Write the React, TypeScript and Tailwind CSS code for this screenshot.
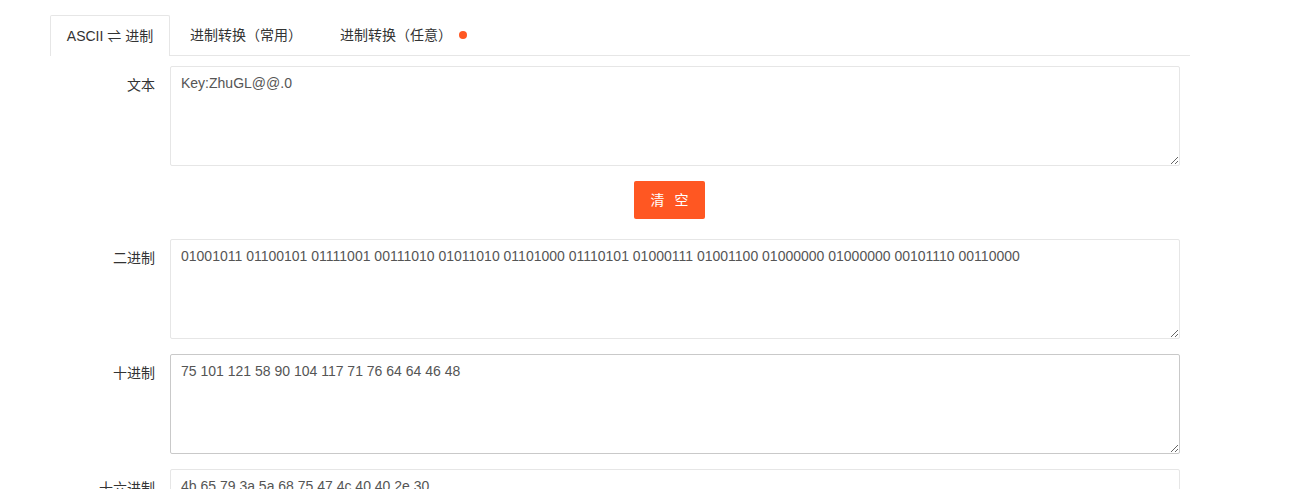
import { useEffect, useRef } from "react";

const font = "font-['Liberation_Sans','Noto_Sans_CJK_SC',sans-serif]";

const rows = [
  { label: "二进制", value: "01001011 01100101 01111001 00111010 01011010 01101000 01110101 01000111 01001100 01000000 01000000 00101110 00110000" },
  { label: "十进制", value: "75 101 121 58 90 104 117 71 76 64 64 46 48", focused: true },
  { label: "十六进制", value: "4b 65 79 3a 5a 68 75 47 4c 40 40 2e 30" },
];

const Field = ({ label, value, focused }: { label: string; value: string; focused?: boolean }) => {
  const ref = useRef<HTMLTextAreaElement>(null);

  useEffect(() => {
    if (focused && ref.current) {
      const el = ref.current;
      el.focus();
      el.setSelectionRange(value.length, value.length);
    }
  }, [focused, value]);

  return (
    <div className="flex mb-[15px]">
      <label className="w-[110px] shrink-0 px-[15px] py-[9px] leading-5 text-right text-[14px] text-[#333]">{label}</label>
      <textarea
        ref={ref}
        defaultValue={value}
        className={`w-[1010px] h-[100px] min-h-[100px] px-[10px] py-[6px] leading-5 text-[14px] text-[#555] bg-white rounded-[2px] border outline-none caret-[#333] ${
          focused ? "border-[#c9c9c9]" : "border-[#e6e6e6]"
        }`}
      />
    </div>
  );
};

export default function App() {
  return (
    <div className={`${font} bg-white w-[1311px] h-[489px] overflow-hidden pt-[15px]`}>
      <div className="ml-[50px] w-[1140px]">
        <ul className="flex h-[41px] border-b border-[#e6e6e6] text-[14px] text-[#333]">
          <li className="w-[120px] h-[41px] leading-[40px] text-center bg-white border border-b-0 border-[#e6e6e6] rounded-t-[2px]">
            ASCII ⇌ 进制
          </li>
          <li className="w-[150px] leading-[40px] pl-5">进制转换（常用）</li>
          <li className="leading-[40px] pl-5 flex items-center">
            进制转换（任意）
            <span className="ml-[7px] w-2 h-2 rounded-full bg-[#ff5722]" />
          </li>
        </ul>
        <div className="p-[10px]">
          <Field label="文本" value="Key:ZhuGL@@.0" />
          <div className="flex justify-center mb-[20px] pl-[99px]">
            <button className="w-[71px] h-[38px] bg-[#ff5722] text-white text-[14px] rounded-[2px] flex items-center justify-center gap-[10px]">
              <span>清</span>
              <span>空</span>
            </button>
          </div>
          {rows.map((r) => (
            <Field key={r.label} label={r.label} value={r.value} focused={r.focused} />
          ))}
        </div>
      </div>
    </div>
  );
}
